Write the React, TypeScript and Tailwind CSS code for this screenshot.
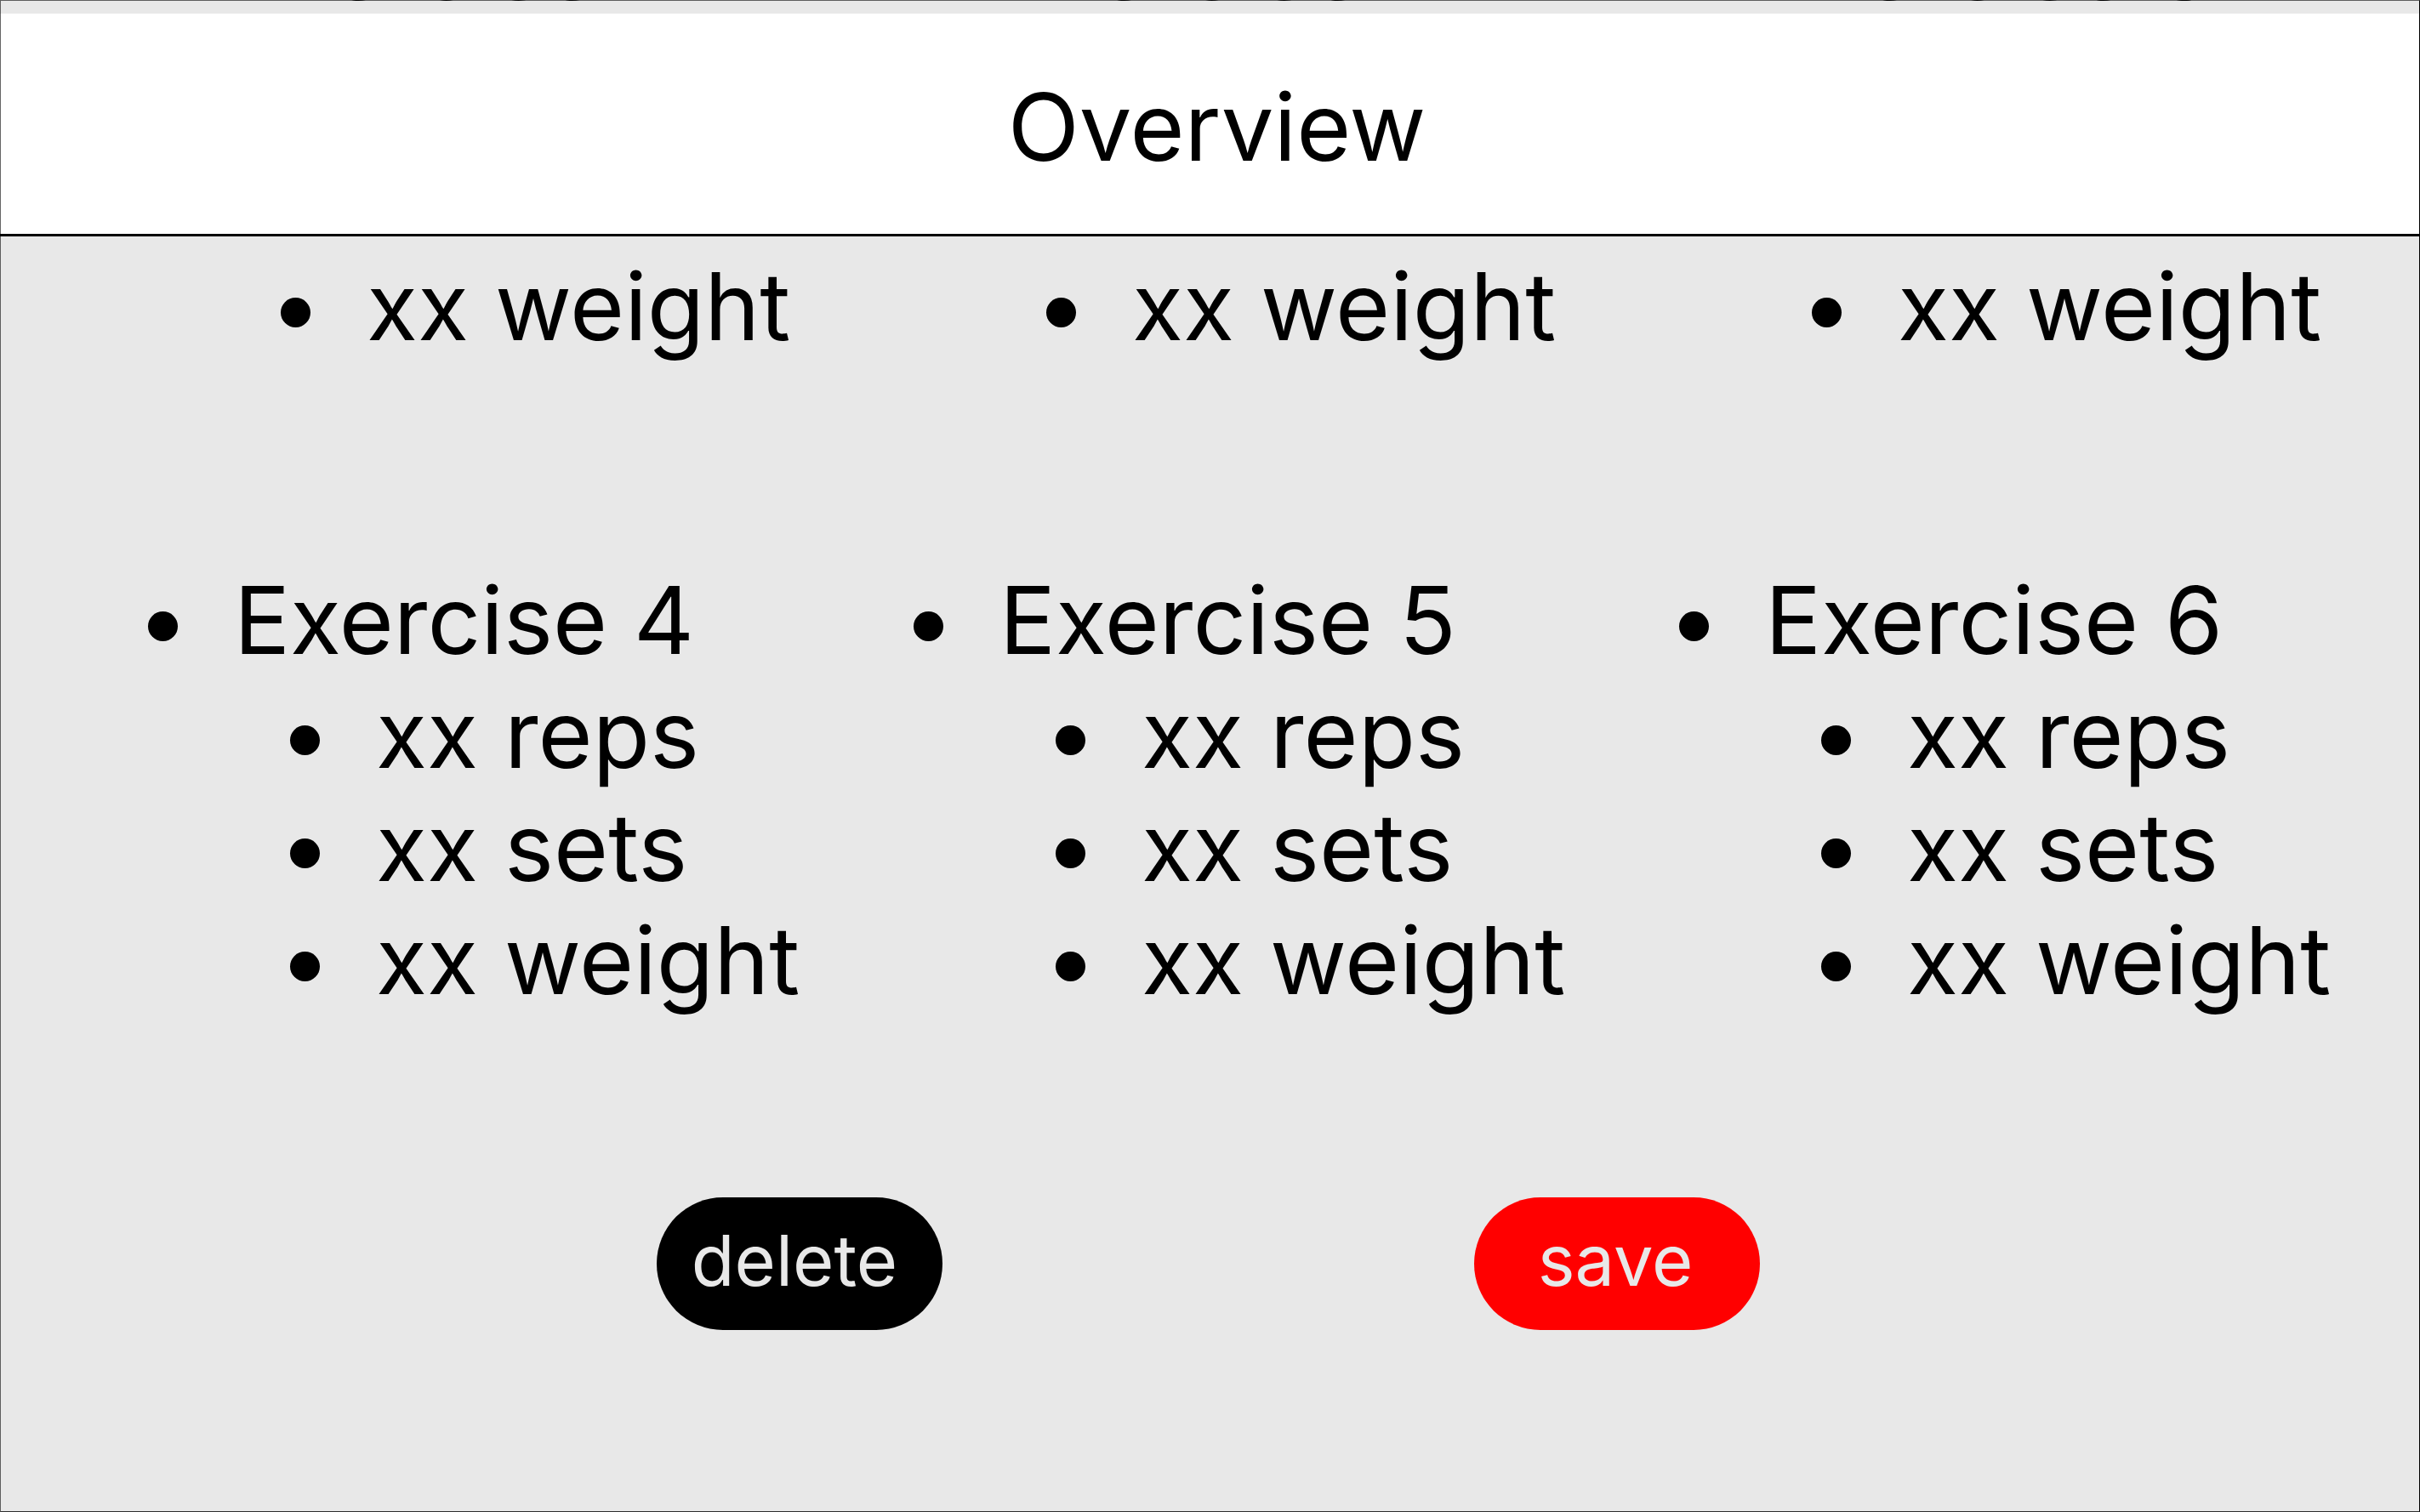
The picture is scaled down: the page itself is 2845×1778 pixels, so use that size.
type Exercise = { name: string; details: string[] };

const details = ["xx reps", "xx sets", "xx weight"];

const firstRow: Exercise[] = [
  { name: "Exercise 1", details },
  { name: "Exercise 2", details },
  { name: "Exercise 3", details },
];

const secondRow: Exercise[] = [
  { name: "Exercise 4", details },
  { name: "Exercise 5", details },
  { name: "Exercise 6", details },
];

function Line({ text }: { text: string }) {
  return (
    <div className="flex items-center gap-[66px] whitespace-nowrap">
      <span aria-hidden="true" className="mt-[14px] size-[35px] shrink-0 rounded-full bg-black" />
      <span>{text}</span>
    </div>
  );
}

function ExerciseColumn({ exercise }: { exercise: Exercise }) {
  return (
    <ul>
      <li>
        <Line text={exercise.name} />
        <ul className="pt-px pl-[167px]">
          {exercise.details.map((detail) => (
            <li key={detail}>
              <Line text={detail} />
            </li>
          ))}
        </ul>
      </li>
    </ul>
  );
}

export default function App() {
  return (
    <div className="relative h-screen overflow-hidden bg-[#e8e8e8] font-['Inter',sans-serif] text-[110px] leading-[133px] text-black">
      <main>
        <section className="-mt-[106px] grid grid-cols-3 pl-[145px]">
          {firstRow.map((exercise) => (
            <div key={exercise.name} className="min-w-0 pl-[18px]">
              <ExerciseColumn exercise={exercise} />
            </div>
          ))}
        </section>
        <section className="mt-[236px] grid grid-cols-3 pl-[145px]">
          {secondRow.map((exercise) => (
            <div key={exercise.name} className="min-w-0 pl-[29px]">
              <ExerciseColumn exercise={exercise} />
            </div>
          ))}
        </section>
        <div className="mt-[212px] flex justify-center gap-[625px] pr-1 text-[83px] leading-[100px] text-[#e8e8e8]">
          <button type="button" className="h-[156px] w-[336px] rounded-full bg-black pr-3 pb-2">
            delete
          </button>
          <button type="button" className="h-[156px] w-[336px] rounded-full bg-[#ff0000] pr-1 pb-2">
            save
          </button>
        </div>
      </main>
      <header className="absolute inset-x-0 top-4 border-b-[3px] border-black bg-white pt-[67px] pb-[59px] pl-4 text-center">
        <h1>Overview</h1>
      </header>
      <div
        aria-hidden="true"
        className="pointer-events-none absolute inset-0 border border-black/60 border-r-black border-b-black/80"
      />
    </div>
  );
}
